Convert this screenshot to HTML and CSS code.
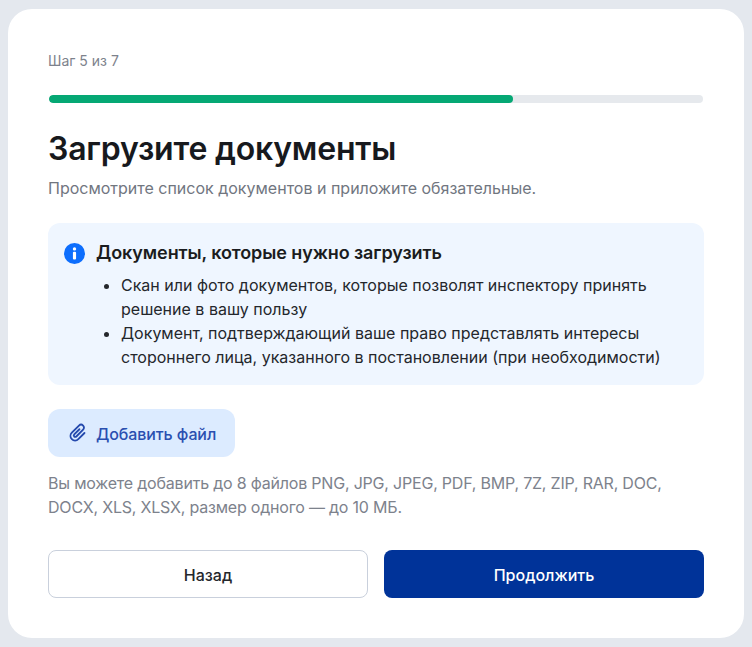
FILE: index.html
```html
<!DOCTYPE html>
<html lang="ru">
<head>
<meta charset="utf-8">
<title>Загрузите документы</title>
<link rel="stylesheet" href="styles.css">
</head>
<body>
<main class="card">
  <div class="step">Шаг 5 из 7</div>
  <div class="progress"><div class="progress-fill"></div></div>
  <h1 class="title">Загрузите документы</h1>
  <p class="subtitle">Просмотрите список документов и приложите обязательные.</p>
  <section class="info">
    <div class="info-head">
      <svg class="info-icon" viewBox="0 0 20 20" aria-hidden="true"><circle cx="10" cy="10" r="10" fill="#0d6efd"/><circle cx="10" cy="5.6" r="1.6" fill="#fff"/><rect x="8.5" y="8.4" width="3" height="7.4" rx="1" fill="#fff"/></svg>
      <h2 class="info-title">Документы, которые нужно загрузить</h2>
    </div>
    <ul class="info-list">
      <li>Скан или фото документов, которые позволят инспектору принять решение в вашу пользу</li>
      <li>Документ, подтверждающий ваше право представлять интересы стороннего лица, указанного в постановлении (при необходимости)</li>
    </ul>
  </section>
  <button class="add-file" type="button">
    <svg class="clip" viewBox="0 0 24 24" aria-hidden="true"><path transform="rotate(45 12 12)" d="M17 7v9.5a5 5 0 0 1-10 0V5.5a3.2 3.2 0 0 1 6.4 0v10.5a1.6 1.6 0 0 1-3.2 0V8" fill="none" stroke="#2449ad" stroke-width="2" stroke-linecap="round" stroke-linejoin="round"/></svg>
    <span class="add-label">Добавить файл</span>
  </button>
  <p class="hint">Вы можете добавить до 8 файлов PNG, JPG, JPEG, PDF, BMP, 7Z, ZIP, RAR, DOC, DOCX, XLS, XLSX, размер одного — до 10 МБ.</p>
  <div class="actions">
    <button class="btn btn-back" type="button">Назад</button>
    <button class="btn btn-next" type="button">Продолжить</button>
  </div>
</main>
</body>
</html>
```
FILE: styles.css
```css
* { box-sizing: border-box; }
html, body { height: 100%; }
body {
  margin: 0;
  padding: 9px 8px;
  background: #e4e8ee;
  font-family: Inter, "Noto Sans", sans-serif;
  color: #1a1c20;
}
.card {
  background: #fff;
  border-radius: 24px;
  height: 629px;
  padding: 40px;
}
.step { padding-top: 1px; height: 22px; font-size: 14px; line-height: 22px; color: #7d828c; }
.progress {
  margin: 24px 1px 0;
  height: 8px;
  border-radius: 4px;
  background: #e6e9ed;
  overflow: hidden;
}
.progress-fill { width: 71%; height: 100%; border-radius: 4px; background: #05a874; }
.title { margin: 24px 0 0; font-size: 32px; line-height: 44px; font-weight: 600; letter-spacing: -0.2px; color: #17191d; }
.subtitle { margin: 5px 0 0; font-size: 16px; line-height: 24px; color: #71767f; }
.info {
  margin-top: 23px;
  height: 162px;
  padding: 17px 16px 16px;
  border-radius: 12px;
  background: #eff6ff;
}
.info-head { display: flex; align-items: center; gap: 11px; height: 26px; }
.info-icon { width: 21px; height: 21px; flex: none; }
.info-title { margin: 0; font-size: 18px; line-height: 26px; font-weight: 600; letter-spacing: -0.1px; }
.info-list { margin: 7px 0 0; padding: 0 0 0 57px; font-size: 16px; line-height: 24px; color: #24272c; }
.add-file {
  display: flex;
  align-items: center;
  gap: 7px;
  width: 187px;
  height: 48px;
  margin-top: 24px;
  padding: 0 0 0 19px;
  border: 0;
  border-radius: 12px;
  background: #dcebff;
  color: #2a4fb0;
  font: 500 16px Inter, "Noto Sans", sans-serif;
  letter-spacing: -0.1px;
  white-space: nowrap;
}
.add-label { padding-top: 1px; }
.clip { width: 22px; height: 22px; flex: none; }
.hint { margin: 14px 0 0; font-size: 16px; line-height: 24px; letter-spacing: -0.2px; color: #7d828c; }
.actions { display: grid; grid-template-columns: 1fr 1fr; gap: 16px; margin-top: 31px; }
.btn {
  height: 48px;
  padding: 2px 0 0;
  border-radius: 8px;
  font: 500 16px Inter, "Noto Sans", sans-serif;
}
.btn-back { background: #fff; border: 1px solid #c9d0dc; color: #24272c; }
.btn-next { background: #003399; border: 0; color: #fff; }
```
